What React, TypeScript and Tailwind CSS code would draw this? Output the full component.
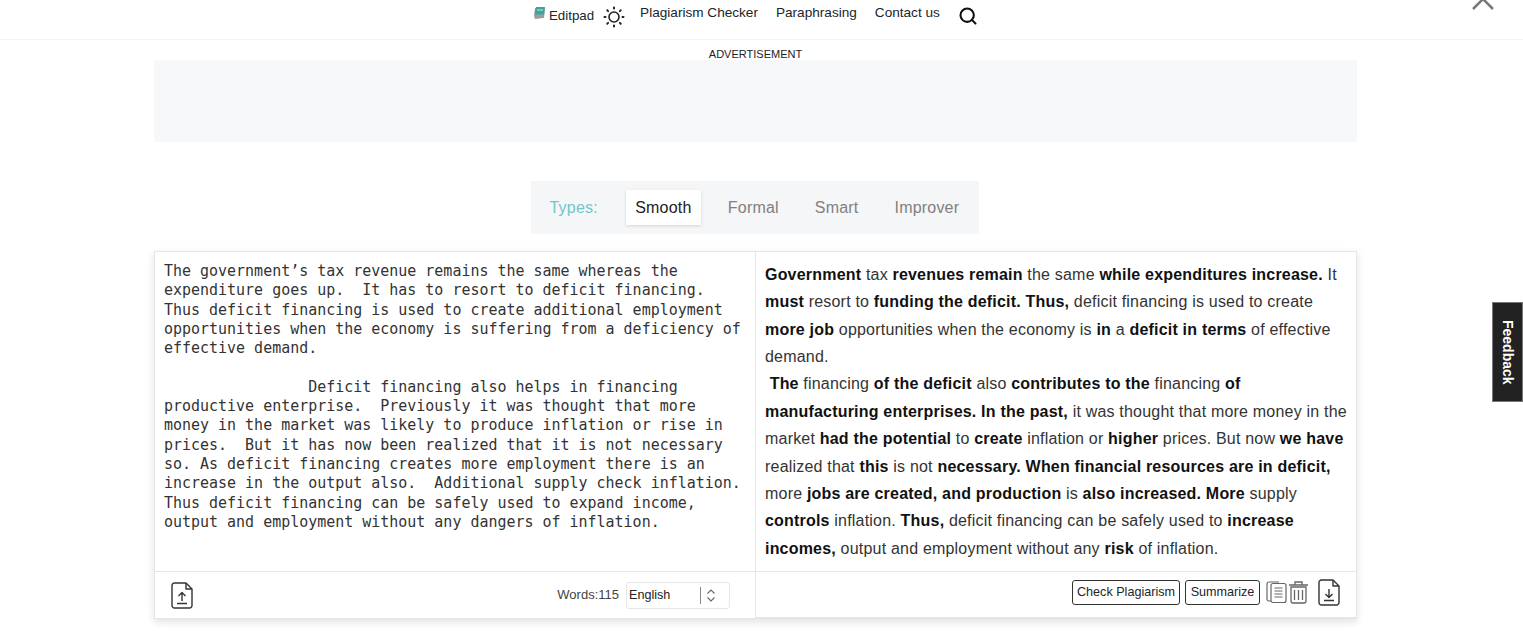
import React from "react";
import { Search } from "lucide-react";

const leftText = `The government’s tax revenue remains the same whereas the expenditure goes up.  It has to resort to deficit financing.  Thus deficit financing is used to create additional employment opportunities when the economy is suffering from a deficiency of effective demand.

                Deficit financing also helps in financing productive enterprise.  Previously it was thought that more money in the market was likely to produce inflation or rise in prices.  But it has now been realized that it is not necessary so. As deficit financing creates more employment there is an increase in the output also.  Additional supply check inflation.  Thus deficit financing can be safely used to expand income, output and employment without any dangers of inflation.`;

function SunIcon() {
  return (
    <svg width="22" height="22" viewBox="0 0 22 22" fill="none" stroke="#222" strokeWidth="2" strokeLinecap="round">
      <circle cx="11" cy="11" r="5" strokeWidth="1.600" />
      <path d="M11 1.500v1M11 19.500v1M1.500 11h1M19.500 11h1M4.300 4.300l.8.8M16.900 16.900l.8.8M4.300 17.700l.8-.8M16.900 5.100l.8-.8" />
    </svg>
  );
}

function LogoIcon() {
  return (
    <svg width="14" height="14" viewBox="0 0 14 14">
      <path d="M1 10l1-8 9-1 1 2-1 9-9 1z" fill="#9a9f9d" />
      <path d="M1.500 8.500L3 1h9l-1 7.500z" fill="#3fa59a" />
      <path d="M4 4h6" stroke="#bfe5df" strokeWidth="1" />
    </svg>
  );
}

function FileIcon({ down }: { down?: boolean }) {
  return (
    <svg width="22" height="27" viewBox="0 0 22 27" fill="none" stroke="#333" strokeWidth="1.400" strokeLinejoin="round">
      <path d="M3.500 1h11.500l6 6v16.500a2.500 2.500 0 0 1-2.500 2.500h-15a2.500 2.500 0 0 1-2.500-2.500v-20a2.500 2.500 0 0 1 2.500-2.500z" />
      <path d="M15 1v6h6" />
      {down ? <path d="M11 10v8M7.500 15l3.500 3.500 3.500-3.500M6 21.500h10" /> : <path d="M11 19v-8M7.500 14l3.500-3.500 3.500 3.500M6 21.500h10" />}
    </svg>
  );
}

function CopyIcon() {
  return (
    <svg width="21" height="24" viewBox="0 0 21 24" fill="none" stroke="#666" strokeWidth="1.200">
      <path d="M5 21H3a2 2 0 0 1-2-2V4a2 2 0 0 1 2-2h10" />
      <rect x="5" y="3.500" width="15" height="19" rx="2" />
      <path d="M8.500 8h8M8.500 11h8M8.500 14h8M8.500 17h8" />
    </svg>
  );
}

function TrashIcon() {
  return (
    <svg width="21" height="24" viewBox="0 0 21 24" fill="none" stroke="#666" strokeWidth="1.300">
      <path d="M1 5h19M7 4.500V2h7v2.500" />
      <path d="M3 7h15v14a2 2 0 0 1-2 2H5a2 2 0 0 1-2-2z" />
      <path d="M6.500 10v10M10.500 10v10M14.500 10v10" />
    </svg>
  );
}

export default function App() {
  return (
    <div className="relative h-[631px] overflow-hidden bg-white font-['Liberation_Sans',Arial,sans-serif] text-[#212529]">
      <header className="flex h-10 items-start border-b border-[#f4f4f4] pl-[533px]">
        <span className="mt-[6px]"><LogoIcon /></span>
        <span className="ml-[2px] mt-[6px] text-[13.300px] leading-5">Editpad</span>
        <span className="ml-[9px] mt-[6px]"><SunIcon /></span>
        <span className="ml-[15px] mt-[3px] text-[13.600px] leading-5">Plagiarism Checker</span>
        <span className="ml-[18px] mt-[3px] text-[13.600px] leading-5">Paraphrasing</span>
        <span className="ml-[18px] mt-[3px] text-[13.600px] leading-5">Contact us</span>
        <Search className="ml-[18px] mt-[6px]" size={20} strokeWidth={2.500} color="#111" />
      </header>

      <div className="ml-[154px] w-[1203px]">
        <div className="h-5 text-center text-[11px] leading-[28px] text-[#222]">ADVERTISEMENT</div>
        <div className="h-[82px] bg-[#f7f8fa]" />

        <div className="mt-[39px] flex justify-center pr-[2px]">
          <div className="flex h-[53px] w-[448px] items-center bg-[#f5f6f8] pl-[19px] text-base tracking-[0.2px]">
            <span className="text-[#72c6cb]">Types:</span>
            <span className="ml-[28px] flex h-[35px] w-[75px] items-center justify-center bg-white text-[#222] shadow-[0_1px_3px_rgba(0,0,0,0.15)]">Smooth</span>
            <span className="ml-[27px] text-[#808080]">Formal</span>
            <span className="ml-[36px] text-[#808080]">Smart</span>
            <span className="ml-[36px] text-[#808080]">Improver</span>
          </div>
        </div>

        <div className="mt-[17px] grid h-[368px] grid-cols-[601px_1fr] border border-[#e6e6e6] shadow-[0_3px_8px_rgba(0,0,0,0.12)]">
          <div className="flex flex-col border-r border-[#e6e6e6]">
            <div className="h-[319px] whitespace-pre-wrap py-[10px] pl-[9px] pr-[12px] font-['DejaVu_Sans_Mono',monospace] text-[14.970px] leading-[19.300px] text-[#333]">
              {leftText}
            </div>
            <div className="flex flex-1 items-center border-t border-[#e6e6e6] pl-[16px] pr-[25px]">
              <FileIcon />
              <span className="ml-auto text-[13px] text-[#444]">Words:115</span>
              <div className="ml-[7px] flex h-[27px] w-[104px] items-center rounded-[3px] border border-[#e6e6e6] pl-[2px] text-[12.600px] text-[#222]">
                English
                <span className="ml-auto mr-[13px] flex h-[17px] items-center border-l border-[#888] pl-[5px]">
                  <svg width="10" height="15" viewBox="0 0 10 15" fill="none" stroke="#666" strokeWidth="1.100">
                    <path d="M1.500 5.500L5 2l3.500 3.500M1.500 9.500L5 13l3.500-3.500" />
                  </svg>
                </span>
              </div>
            </div>
          </div>

          <div className="flex flex-col">
            <div className="h-[319px] px-[9px] pt-[9px] text-base leading-[27.360px] tracking-[0.2px] text-[#333] [&_b]:text-[#111]">
              <b>Government</b> tax <b>revenues remain</b> the same <b>while expenditures increase.</b> It <b>must</b> resort to <b>funding the deficit. Thus,</b> deficit financing is used to create <b>more job</b> opportunities when the economy is <b>in</b> a <b>deficit in terms</b> of effective demand.
              <br />
              &nbsp;<b>The</b> financing <b>of the deficit</b> also <b>contributes to the</b> financing <b>of manufacturing enterprises. In the past,</b> it was thought that more money in the market <b>had the potential</b> to <b>create</b> inflation or <b>higher</b> prices. But now <b>we have</b> realized that <b>this</b> is not <b>necessary. When financial resources are in deficit,</b> more <b>jobs are created, and production</b> is <b>also increased. More</b> supply <b>controls</b> inflation. <b>Thus,</b> deficit financing can be safely used to <b>increase incomes,</b> output and employment without any <b>risk</b> of inflation.
            </div>
            <div className="flex flex-1 items-center justify-end border-y border-[#e6e6e6] pb-[5px] pr-[16px]">
              <button className="h-[25px] w-[108px] rounded-[3px] border border-[#333] text-[12.600px]">Check Plagiarism</button>
              <button className="ml-[5px] h-[25px] w-[75px] rounded-[3px] border border-[#333] text-[12.600px]">Summarize</button>
              <span className="ml-[6px]"><CopyIcon /></span>
              <span className="ml-[1px]"><TrashIcon /></span>
              <span className="ml-[9px]"><FileIcon down /></span>
            </div>
          </div>
        </div>
      </div>

      <svg className="absolute right-[29px] -top-[12px]" width="22" height="22" viewBox="0 0 22 22" stroke="#777" strokeWidth="2.500">
        <path d="M1 1l20 20M21 1L1 21" />
      </svg>

      <div className="absolute right-0 top-[302px] flex h-[100px] w-[31px] items-center justify-center border border-[#777] bg-[#222] text-sm font-bold text-white [writing-mode:vertical-rl]">
        Feedback
      </div>
    </div>
  );
}
